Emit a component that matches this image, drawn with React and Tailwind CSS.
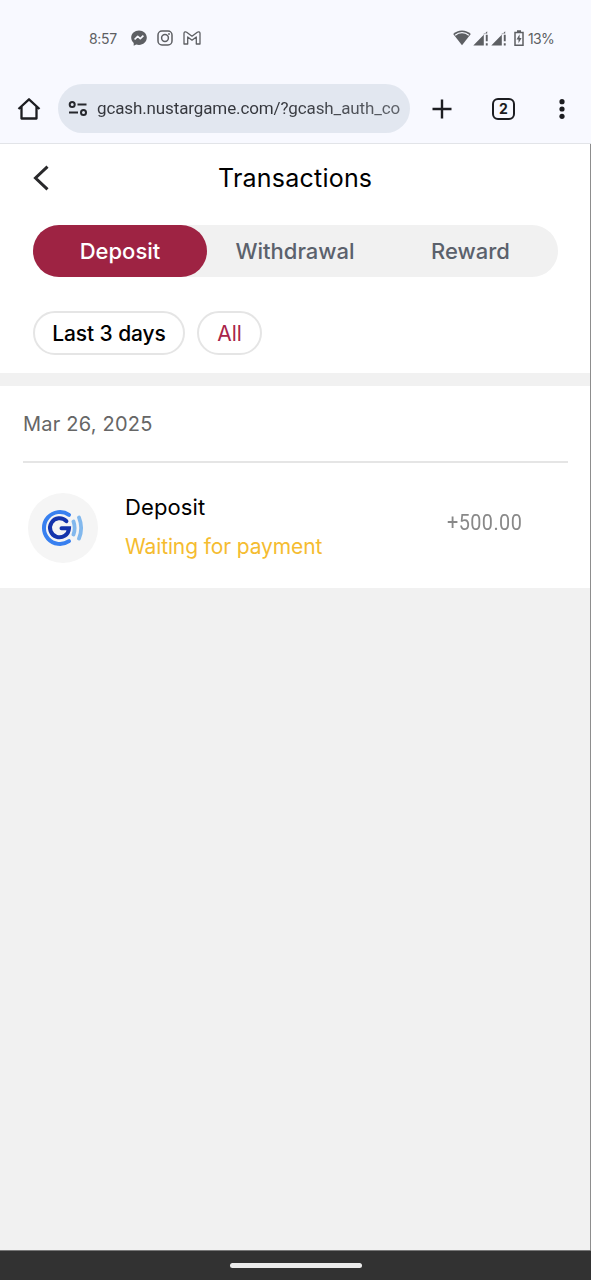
import React, { useState } from 'react';
import clsx from 'clsx';

const TABS = [
  { id: 'deposit', label: 'Deposit', className: 'w-[174px]' },
  { id: 'withdrawal', label: 'Withdrawal', className: 'w-[176px]' },
  { id: 'reward', label: 'Reward', className: 'w-[175px]' },
];

const TRANSACTIONS = [
  { id: 1, title: 'Deposit', status: 'Waiting for payment', amount: '+500.00' },
];

const MessengerIcon = () => (
  <svg viewBox="0 0 16 16" className="w-4 h-4">
    <path fill="#5d5f63" d="M8 .4C3.7.4.2 3.5.2 7.600c0 2.200.9 4.100 2.500 5.400v2.800l2.500-1.200c.9.2 1.800.4 2.800.4 4.300 0 7.800-3.100 7.800-7.400S12.300.4 8 .4z" />
    <path fill="none" stroke="#f8f9ff" strokeWidth="1.700" strokeLinejoin="round" d="M3.600 9.500 6.700 6.400l2.600 2.200 3.100-3" />
  </svg>
);

const InstagramIcon = () => (
  <svg viewBox="0 0 16 16" className="w-4 h-4" fill="none" stroke="#5d5f63" strokeWidth="1.5">
    <rect x="1" y="1" width="14" height="14" rx="4" />
    <circle cx="8" cy="8" r="3.400" />
    <circle cx="12" cy="4" r=".9" fill="#5d5f63" stroke="none" />
  </svg>
);

const GmailIcon = () => (
  <svg viewBox="0 0 18 14" className="w-[18px] h-[14px]" fill="none" stroke="#5d5f63" strokeWidth="1.300" strokeLinejoin="round">
    <path d="M1 2.300C1 .8 2.600.4 3.700 1.200L9 5.200l5.300-4C15.400.4 17 .8 17 2.300V13h-3.700V6L9 9.200 4.700 6v7H1z" />
  </svg>
);

const WifiIcon = () => (
  <svg viewBox="0 0 18 16" className="w-[18px] h-4">
    <path fill="#5d5f63" d="M9 .6C5.500.6 2.500 1.900.2 4L9 15.200 17.800 4C15.500 1.900 12.500.6 9 .6z" />
    <path fill="none" stroke="#f8f9ff" strokeWidth="1.300" d="M2.200 5.200C4.100 3.600 6.300 2.700 9 2.700s4.900.9 6.800 2.500" />
  </svg>
);

const SignalIcon = () => (
  <svg viewBox="0 0 16 16" className="w-4 h-4" fill="#5d5f63">
    <path d="M.3 15.500 14.200 1.200v2.300h-3.400v12z" />
    <path d="M12.800 4.800h1.900v6.500h-1.900zM12.800 13.300h1.900v2.200h-1.900z" />
  </svg>
);

const BatteryIcon = () => (
  <svg viewBox="0 0 10 16" className="w-[10px] h-4">
    <path fill="none" stroke="#5d5f63" strokeWidth="1.500" d="M1 2.500h8v12.700H1z" />
    <path fill="#5d5f63" d="M3 .2h4v2H3zM5.600 4.300 2.500 9.400h2v3.800l3.100-5.200h-2z" />
  </svg>
);

const HomeIcon = () => (
  <svg viewBox="0 0 24 24" className="w-6 h-6" fill="none" stroke="#1c1d21" strokeWidth="2.300" strokeLinejoin="round">
    <path d="M1.500 12 12 2.300 22.500 12M4.500 9.800V21.500h15V9.800" />
  </svg>
);

const TuneIcon = () => (
  <svg viewBox="0 0 20 18" className="w-5 h-[18px]" fill="none" stroke="#26282d" strokeWidth="2">
    <circle cx="4.200" cy="4.600" r="2.500" />
    <path d="M9.500 4.600H18.500M1 12.600h9" />
    <circle cx="15.500" cy="12.600" r="2.500" />
  </svg>
);

const GCashLogo = () => (
  <svg viewBox="0 0 44 38" className="w-[44px] h-[38px]" fill="none" strokeLinecap="round">
    <path stroke="#3880f0" strokeWidth="4" d="M28 5.800A16 16 0 1 0 28 32.200" />
    <path stroke="#1434ac" strokeWidth="4" d="M25.400 12.200A9.500 9.500 0 1 0 28 19.300H20.500" />
    <path stroke="#82b8ed" strokeWidth="3.800" d="M32.500 12.500q2.300 6.500 0 13M38 8.500q4.300 10.500 0 21" />
  </svg>
);

function StatusBar() {
  return (
    <div className="h-[76px] flex items-center justify-between pl-[89px] pr-[37px] text-[#5d5f63]">
      <div className="flex items-center">
        <span className="w-[42px] text-[14px] tracking-[-0.3px]">8:57</span>
        <MessengerIcon />
        <span className="ml-[10px]"><InstagramIcon /></span>
        <span className="ml-[10px]"><GmailIcon /></span>
      </div>
      <div className="flex items-center">
        <WifiIcon />
        <span className="ml-[2px]"><SignalIcon /></span>
        <span className="ml-[2px]"><SignalIcon /></span>
        <span className="ml-[7px]"><BatteryIcon /></span>
        <span className="w-[26px] ml-[4px] text-[14px] tracking-[-0.7px]">13%</span>
      </div>
    </div>
  );
}

function BrowserBar() {
  return (
    <div className="h-[68px] flex items-start pt-2 pl-[17px] border-b border-[#e2e4e8] text-[#1c1d21]">
      <div className="h-[49px] flex items-center"><HomeIcon /></div>
      <div className="ml-[17px] w-[352px] h-[49px] rounded-full bg-[#e2e7f0] flex items-center pl-[10px]">
        <TuneIcon />
        <span className="ml-[9px] w-[306px] whitespace-nowrap font-[Roboto] text-[17px] tracking-[-0.120px] bg-linear-to-r from-[#34363c] from-60% to-[#60646b] bg-clip-text text-transparent">
          gcash.nustargame.com/?gcash_auth_co
        </span>
      </div>
      <div className="h-[49px] flex items-center">
        <svg viewBox="0 0 20 20" className="ml-[22px] w-5 h-5" stroke="#1c1d21" strokeWidth="2.400">
          <path d="M10 .5v19M.5 10h19" />
        </svg>
        <div className="ml-10 w-[23px] h-[22px] rounded-[6px] border-[2.500px] border-[#1c1d21] flex items-center justify-center text-[14px] font-bold leading-none">2</div>
        <svg viewBox="0 0 6 20" className="ml-[44px] w-[6px] h-5" fill="#1c1d21">
          <circle cx="3" cy="2.700" r="2.600" />
          <circle cx="3" cy="10" r="2.600" />
          <circle cx="3" cy="17.300" r="2.600" />
        </svg>
      </div>
    </div>
  );
}

export default function App() {
  const [activeTab, setActiveTab] = useState('deposit');

  return (
    <div className="w-[591px] h-[1280px] flex flex-col overflow-hidden bg-[#f8f9ff] font-[Inter,sans-serif]">
      <StatusBar />
      <BrowserBar />

      <main className="flex-1 bg-[#f1f1f1] border-r border-[#8d8d8d]">
        {/* Title, tabs and filters */}
        <section className="h-[229px] bg-white">
          <header className="h-[81px] flex items-start pt-[17px] pl-[33px]">
            <button className="w-4 h-[33px] flex items-center" aria-label="Back">
              <svg viewBox="0 0 16 26" className="w-4 h-[26px]" fill="none" stroke="#29292b" strokeWidth="3">
                <path d="M14.500 1.700 2.500 13l12 11.300" />
              </svg>
            </button>
            <h1 className="ml-[169px] text-[25px] leading-[34px] tracking-[0.220px] text-black">Transactions</h1>
          </header>

          <div className="ml-[33px] w-[525px] h-[52px] flex rounded-full bg-[#f1f1f1]">
            {TABS.map(tab => (
              <button
                key={tab.id}
                onClick={() => setActiveTab(tab.id)}
                className={clsx(
                  'h-full pt-px rounded-full text-[22px] font-medium tracking-[0px]',
                  tab.className,
                  activeTab === tab.id ? 'bg-[#9e2343] text-white' : 'text-[#5b616c]'
                )}
              >
                {tab.label}
              </button>
            ))}
          </div>

          <div className="mt-[34px] ml-[33px] flex gap-3">
            <button className="w-[152px] h-11 pt-0.5 rounded-full border-2 border-[#e5e5e5] text-[21px] font-medium tracking-[-0.1px] text-black">Last 3 days</button>
            <button className="w-[65px] h-11 pt-0.5 rounded-full border-2 border-[#e5e5e5] text-[21px] text-[#a92549]">All</button>
          </div>
        </section>

        {/* Transaction list */}
        <section className="mt-[13px] h-[202px] bg-white pl-[23px] pr-[22px]">
          <div className="h-[77px] flex items-center border-b-2 border-[#e5e5e5] text-[20px] tracking-[0.220px] text-[#666]">Mar 26, 2025</div>
          {TRANSACTIONS.map(tx => (
            <div key={tx.id} className="h-[125px] flex items-start pt-[30px] pl-[5px]">
              <div className="w-[70px] h-[70px] rounded-full bg-[#f5f5f5] flex items-center justify-center">
                <GCashLogo />
              </div>
              <div className="ml-[27px] w-[322px]">
                <p className="text-[22px] leading-7 tracking-[0.1px] text-black">{tx.title}</p>
                <p className="mt-[11px] text-[21px] leading-[29px] tracking-[-0.120px] text-[#f5bc30]">{tx.status}</p>
              </div>
              <span className="mt-[16px] origin-left scale-x-90 font-[Roboto] text-[22px] leading-7 tracking-[0.5px] text-[#888]">{tx.amount}</span>
            </div>
          ))}
        </section>
      </main>

      <footer className="h-[30px] bg-[#323232] border-t border-[#777] flex justify-center pt-[12px]">
        <div className="w-[132px] h-[5px] rounded-full bg-[#ececec]" />
      </footer>
    </div>
  );
}
